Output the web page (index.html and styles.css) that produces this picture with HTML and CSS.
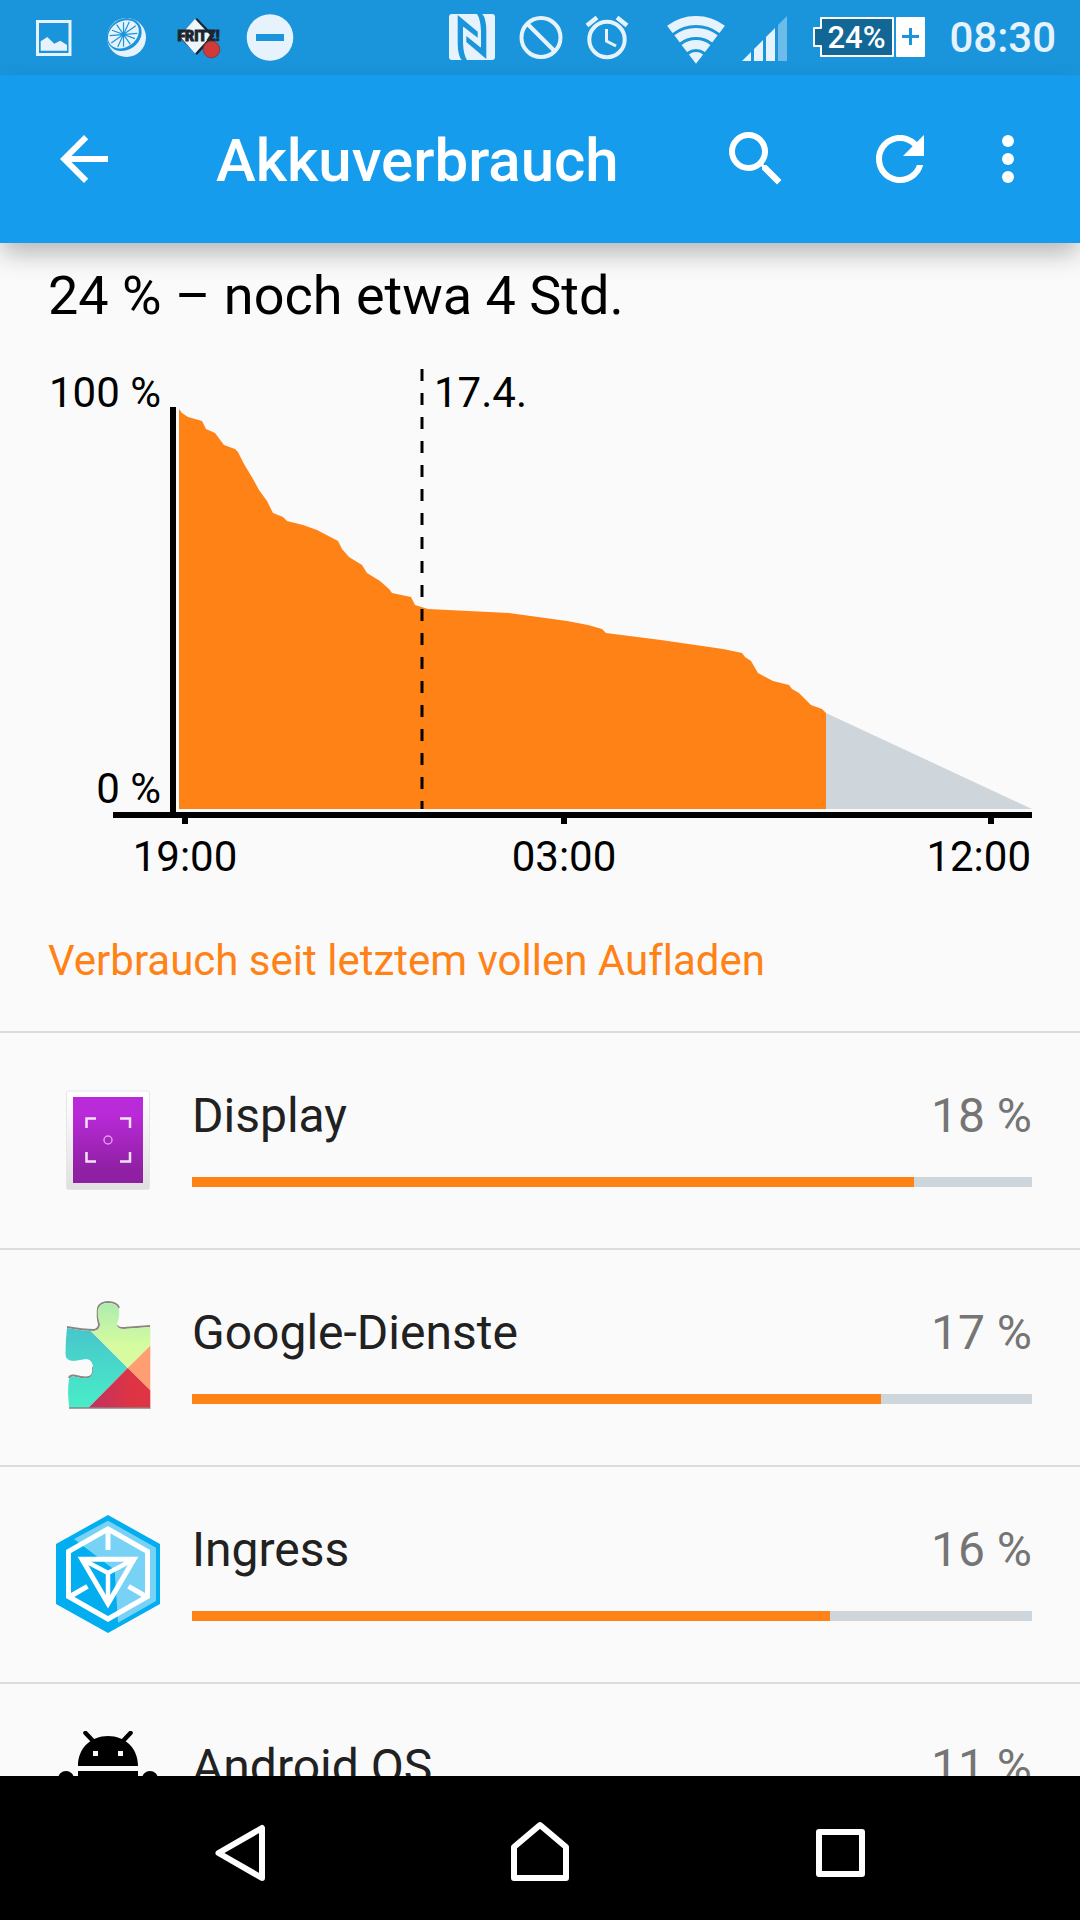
FILE: index.html
```html
<!DOCTYPE html>
<html lang="de">
<head>
<meta charset="utf-8">
<meta name="viewport" content="width=device-width, initial-scale=1">
<title>Akkuverbrauch</title>
<link rel="stylesheet" href="styles.css">
</head>
<body>
<div class="app">
  <div class="status-bar">
    <svg class="slot" viewBox="18 0 72 75" aria-hidden="true">
      <path d="M37.5 21.5h32.5v33h-32.5z" fill="none" stroke="#e6f3fc" stroke-width="3"/>
      <path d="M40.7 41.3 47.3 37 54.3 43.7 60.3 40.7 67 45v5.7H40.7z" fill="#e6f3fc"/>
    </svg>
    <svg class="slot" viewBox="90 0 72 75" aria-hidden="true">
      <circle cx="126.5" cy="37.5" r="19.5" fill="#e6f3fc"/>
      <g transform="rotate(-35 124.5 35)">
        <ellipse cx="124.5" cy="34.5" rx="18.3" ry="15.5" fill="#1a95dc"/>
        <ellipse cx="124" cy="33.8" rx="16.6" ry="12.8" fill="#e6f3fc"/>
        <g stroke="#1a95dc" stroke-width="1.2">
          <path d="M109 34h30M124 22v24M112 27l24 14M112 41l24-14M117 24l14 20M117 44l14-20"/>
        </g>
      </g>
    </svg>
    <svg class="slot" viewBox="162 0 72 75" role="img" aria-label="FRITZ!">
      <path d="M197 18 214.5 36 197 55 178 36z" fill="#1b2730"/>
      <path d="M195 19 211 36 195 53.5 179.5 36z" fill="#eef5fb"/>
      <text class="fritz" x="198.5" y="41" text-anchor="middle">FRITZ!</text>
      <circle cx="211.5" cy="49.5" r="8.3" fill="#d03b3a" stroke="#8b3540"/>
    </svg>
    <svg class="slot" viewBox="234 0 72 75" aria-hidden="true">
      <circle cx="270" cy="37.5" r="23.3" fill="#e6f3fc"/>
      <path d="M256 34h28v7h-28z" fill="#1a95dc"/>
    </svg>
    <span class="spacer"></span>
    <svg class="slot" viewBox="436 0 72 75" aria-hidden="true">
      <rect x="449" y="14" width="46" height="46" rx="3" fill="#e6f3fc"/>
      <path d="M457.7 15 477.7 31.7V37.7L463.7 27H463V43Q463.5 55 467 60H461.7Q458 56 457.7 44z" fill="#1a95dc"/>
      <path d="M486.3 59 466.3 42V36L480.3 47.3H481V31Q480.5 19 477 14H482.3Q486 18 486.3 30z" fill="#1a95dc"/>
    </svg>
    <svg class="slot-small" viewBox="508 0 66 75" fill="none" stroke="#e6f3fc" stroke-width="4" aria-hidden="true">
      <circle cx="541" cy="37.5" r="19.5"/>
      <path d="M527 23.5 555 51.5"/>
    </svg>
    <svg class="slot-small" viewBox="574 0 66 75" fill="none" stroke="#e6f3fc" stroke-width="4" aria-hidden="true">
      <circle cx="607" cy="39.5" r="17.7"/>
      <path d="M587 25.5 597 17.5M627 25.5 617 17.5" stroke-width="4.5"/>
      <path d="M606.5 29V41L616 46" stroke-width="3"/>
    </svg>
    <svg class="slot wifi" viewBox="660 0 72 75" fill="none" stroke="#e6f3fc" stroke-width="9" aria-hidden="true">
      <path d="M669.8 29.4A43.2 43.2 0 0 1 722.2 29.4"/>
      <path d="M677.1 38.9A31.2 31.2 0 0 1 714.9 38.9"/>
      <path d="M684.3 48.5A19.2 19.2 0 0 1 707.7 48.5"/>
      <path d="M696 63.7 688.9 54.4A11.7 11.7 0 0 1 703.1 54.4z" fill="#e6f3fc" stroke="none"/>
    </svg>
    <svg class="slot-small" viewBox="732 0 66 75" fill="#e6f3fc" aria-hidden="true">
      <path d="M742 61l9-9v9zM754 61V49l9-9v21zM766 61V37l9-9v33z"/>
      <path d="M778 61V25l9-9v45z" fill="#6cbbe9"/>
    </svg>
    <svg class="battery" viewBox="798 0 134 75" role="img" aria-label="Akku 24%">
      <path d="M821 18H893V56H821V46H814V28H821z" fill="#126797" stroke="#fff" stroke-width="2" stroke-linejoin="round"/>
      <rect x="896" y="17" width="29" height="40" rx="1" fill="#fff"/>
      <path d="M902 36.5h17M910.5 28v17" stroke="#1a95dc" stroke-width="3"/>
      <text class="battery-text" x="856.5" y="48" text-anchor="middle">24%</text>
    </svg>
    <time class="clock">08:30</time>
  </div>

  <header class="app-bar">
    <button class="bar-button back" type="button" aria-label="Zurück">
      <svg class="bar-icon" viewBox="0 0 24 24"><path d="M20 11H7.83l5.59-5.59L12 4l-8 8 8 8 1.41-1.41L7.83 13H20v-2z"/></svg>
    </button>
    <h1 class="title">Akkuverbrauch</h1>
    <button class="bar-button" type="button" aria-label="Suchen">
      <svg class="bar-icon" viewBox="0 0 24 24"><path d="M15.5 14h-.79l-.28-.27A6.471 6.471 0 0 0 16 9.5 6.5 6.5 0 1 0 9.5 16c1.61 0 3.09-.59 4.23-1.57l.27.28v.79l5 4.99L20.49 19l-4.99-5zm-6 0C7.01 14 5 11.99 5 9.5S7.01 5 9.5 5 14 7.01 14 9.5 11.99 14 9.5 14z"/></svg>
    </button>
    <button class="bar-button" type="button" aria-label="Aktualisieren">
      <svg class="bar-icon" viewBox="0 0 24 24"><path d="M17.65 6.35C16.2 4.9 14.21 4 12 4c-4.42 0-7.99 3.58-7.99 8s3.57 8 7.99 8c3.73 0 6.84-2.55 7.73-6h-2.08c-.82 2.33-3.04 4-5.65 4-3.31 0-6-2.69-6-6s2.69-6 6-6c1.66 0 3.14.69 4.22 1.78L13 11h7V4l-2.35 2.35z"/></svg>
    </button>
    <button class="bar-button more" type="button" aria-label="Weitere Optionen">
      <svg class="bar-icon" viewBox="0 0 24 24"><circle cx="12" cy="6" r="2"/><circle cx="12" cy="12" r="2"/><circle cx="12" cy="18" r="2"/></svg>
    </button>
  </header>

  <main class="content">
    <section class="summary">
      <h2 class="estimate">24 % – noch etwa 4 Std.</h2>
      <svg class="chart" viewBox="48 356 984 529" role="img" aria-label="Akkuverlauf">
        <path fill="#cfd6db" d="M826 713 1032 809H826z"/>
        <path fill="#ff8216" d="M179 409 182 413 188 417 202 421 206 429 215 433 224 445 235 449 238 452 244 464 253 479 259 490 267 501 273 513 283 517 287 521 303 525 317 530 338 541 342 549 349 557 362 565 367 573 380 581 389 589 392 593 411 597 415 605 428 609 509 613 567 621 588 625 602 629 606 633 661 640 723 649 742 653 745 657 751 661 758 673 773 681 789 685 792 689 799 693 807 701 811 705 822 709 826 713V809H179z"/>
        <path d="M422 369V809" stroke="#000" stroke-width="3" stroke-dasharray="12 12"/>
        <path d="M170 407h6v405h856v6H994v6h-6v-6H567v6h-6v-6H188v6h-6v-6H113v-6h57z"/>
        <g class="chart-label">
          <text x="161" y="407" text-anchor="end">100 %</text>
          <text x="161" y="803" text-anchor="end">0 %</text>
          <text x="434" y="407">17.4.</text>
          <text x="185" y="871" text-anchor="middle">19:00</text>
          <text x="564" y="871" text-anchor="middle">03:00</text>
          <text x="1031" y="871" text-anchor="end">12:00</text>
        </g>
      </svg>
      <p class="caption">Verbrauch seit letztem vollen Aufladen</p>
    </section>

    <ul class="usage">
      <li class="row">
        <svg class="row-icon" viewBox="0 0 120 120" aria-hidden="true">
          <defs>
            <linearGradient id="frame" x2="0" y2="1"><stop stop-color="#fff"/><stop offset="1" stop-color="#e0e0e0"/></linearGradient>
            <linearGradient id="screen" x2="0" y2="1"><stop offset=".2" stop-color="#b92ad8"/><stop offset=".85" stop-color="#8f20a3"/></linearGradient>
          </defs>
          <rect x="18.5" y="11" width="83" height="98.5" rx="2" fill="url(#frame)" stroke="#e6e6e6"/>
          <path d="M25 17h70v86H25z" fill="url(#screen)"/>
          <path d="M38.5 48V38.5H48M72 38.5H82V48M82 72V81.5H72M48 81.5H38.5V72" fill="none" stroke="#f5e3f8" stroke-width="2.5"/>
          <circle cx="60" cy="60" r="4" fill="none" stroke="#dc9be8" stroke-width="1.5"/>
        </svg>
        <div class="row-body">
          <div class="row-head"><label for="use-display">Display</label><span class="percent">18 %</span></div>
          <progress class="meter" id="use-display" max="100" value="86"></progress>
        </div>
      </li>
      <li class="row">
        <svg class="row-icon" viewBox="0 0 120 120" aria-hidden="true">
          <defs>
            <clipPath id="piece"><path d="M19 31Q35 34 46 34Q53 33 52 27Q49 20 50 12Q52 6 60 6Q69 6 71 12Q72 20 69 27Q69 32 76 32L102.3 30V110.5H21.3Q19 95 21 82Q22 79 26 79.5Q40 83 43 79Q45 76 45 72Q45 62 38 62L26 64Q17 64 17.5 56Q17.5 43 19 31z"/></clipPath>
            <linearGradient id="teal" x2="0" y2="1"><stop offset=".2" stop-color="#48c1cc"/><stop offset="1" stop-color="#48edc8"/></linearGradient>
            <linearGradient id="lime" x2="0" y2="1"><stop stop-color="#a9e9b1"/><stop offset=".7" stop-color="#d6fc9f"/></linearGradient>
            <linearGradient id="red"><stop stop-color="#bd3262"/><stop offset=".7" stop-color="#df3444"/></linearGradient>
          </defs>
          <path d="M19 30Q35 33 46 33Q51 32 51 27Q49 20 50 11Q52 5 60 5Q69 5 71 11M69 28Q69 31 76 31L102 29M21 81Q22 78 26 78.5Q40 82 43 79Q46 76 45 70" fill="none" stroke="#8f8580" stroke-width="2"/>
          <g clip-path="url(#piece)">
            <path d="M10 0H42.7V34L79.7 71 40.3 111H10z" fill="url(#teal)"/>
            <path d="M42.7 34V0H103V48L79.7 71z" fill="url(#lime)"/>
            <path d="M103 48V94L79.7 71z" fill="#ff9e73"/>
            <path d="M79.7 71 103 94V111H40.3z" fill="url(#red)"/>
          </g>
          <path d="M21 111H102.5" stroke="#5c4048" stroke-width="1"/>
        </svg>
        <div class="row-body">
          <div class="row-head"><label for="use-google">Google-Dienste</label><span class="percent">17 %</span></div>
          <progress class="meter" id="use-google" max="100" value="82"></progress>
        </div>
      </li>
      <li class="row">
        <svg class="row-icon" viewBox="0 0 120 120" aria-hidden="true">
          <path d="M60 1 112 30V90L60 119 8 90V30z" fill="#02aef0"/>
          <path d="M26 25 60 6.7 108 33.7V87L70 108.7 66.7 56z" fill="#77d2f6"/>
          <g fill="none" stroke="#fff" stroke-width="5">
            <path d="M60 15 99.5 37.5V82.5L60 105 20.5 82.5V37.5z"/>
            <path d="M60 14V36M22 82.5 39.5 72.3M98 82.5 80.5 72.3"/>
            <path d="M34 45.2H86L60 89.5z"/>
            <path d="M34 45.2 60 59 86 45.2M60 59V88" stroke-width="4.5"/>
          </g>
        </svg>
        <div class="row-body">
          <div class="row-head"><label for="use-ingress">Ingress</label><span class="percent">16 %</span></div>
          <progress class="meter" id="use-ingress" max="100" value="76"></progress>
        </div>
      </li>
      <li class="row">
        <svg class="row-icon" viewBox="0 0 120 120" aria-hidden="true">
          <path d="M30 35C30 17 43 5 60 5S90 17 90 35zM30 40H90V88Q90 94 84 94H36Q30 94 30 88z"/>
          <path d="M37.5 2 46 11M82.5 2 74 11" stroke="#000" stroke-width="4.5" stroke-linecap="round"/>
          <path d="M45 20h5v5h-5zM70 20h5v5h-5z" fill="#fafafa"/>
          <path d="M18 48V74M102 48V74M47 92V110M73 92V110" stroke="#000" stroke-width="16" stroke-linecap="round"/>
        </svg>
        <div class="row-body">
          <div class="row-head"><label for="use-android">Android OS</label><span class="percent">11 %</span></div>
          <progress class="meter" id="use-android" max="100" value="53"></progress>
        </div>
      </li>
    </ul>
  </main>

  <nav class="nav-bar">
    <button class="nav-button" type="button" aria-label="Zurück">
      <svg class="nav-icon" viewBox="204 1812 72 72"><path d="M262 1828V1878L218.5 1853z"/></svg>
    </button>
    <button class="nav-button" type="button" aria-label="Startbildschirm">
      <svg class="nav-icon" viewBox="504 1812 72 72"><path d="M514 1878V1847L540 1825 566 1847V1878z"/></svg>
    </button>
    <button class="nav-button" type="button" aria-label="Letzte Apps">
      <svg class="nav-icon" viewBox="804 1812 72 72"><path d="M819 1832H862V1874H819z"/></svg>
    </button>
  </nav>
</div>
</body>
</html>
```
FILE: styles.css
```css
* {
  box-sizing: border-box;
}

body {
  margin: 0;
  background: #fafafa;
  color: #000;
  font-family: Roboto, "Liberation Sans", sans-serif;
  font-variant-ligatures: none;
}

button {
  border: 0;
  padding: 0;
  background: none;
}

.app {
  display: flex;
  flex-direction: column;
  height: 100vh;
}

/* System status bar */
.status-bar {
  display: flex;
  flex: none;
  align-items: center;
  padding: 0 24px 0 18px;
  background: #1a95dc;
}

.status-bar svg {
  flex: none;
  height: 75px;
}

.slot {
  width: 72px;
}

.slot-small {
  width: 66px;
}

.wifi {
  margin-left: 20px;
}

.battery {
  width: 134px;
}

.spacer {
  flex: 1;
}

.fritz {
  font-size: 14px;
  font-weight: 900;
  fill: #1b2730;
  stroke: #1b2730;
  stroke-width: 1px;
}

.battery-text {
  font-size: 31px;
  font-weight: 500;
  fill: #fff;
}

.clock {
  width: 124px;
  color: #e6f3fc;
  font-size: 42px;
  font-weight: 500;
  line-height: 74px;
  text-align: right;
}

/* App bar */
.app-bar {
  position: relative;
  z-index: 1;
  display: flex;
  flex: none;
  height: 168px;
  background: #159cec;
  box-shadow: 0 12px 24px -2px rgba(0, 0, 0, 0.28);
}

.bar-button {
  display: flex;
  align-items: center;
  justify-content: center;
  width: 144px;
}

.back {
  width: 168px;
}

.more {
  width: 108px;
  padding-right: 36px;
}

.bar-icon {
  width: 72px;
  height: 72px;
  fill: #fff;
}

.title {
  flex: 1;
  margin: 0;
  padding: 2px 0 0 48px;
  color: #fff;
  font-size: 60px;
  font-weight: 500;
  line-height: 168px;
}

/* Scrolling content */
.content {
  flex: 1;
  min-height: 0;
  overflow-y: auto;
  scrollbar-width: none;
}

.summary {
  padding: 17px 48px 42px;
}

.estimate {
  margin: 0 0 24px;
  font-size: 54px;
  font-weight: 400;
  line-height: 72px;
}

.chart {
  display: block;
  width: 100%;
}

.chart-label {
  font-size: 42px;
}

.caption {
  margin: 48px 0 0;
  color: #ff8216;
  font-size: 42px;
  line-height: 56px;
}

.usage {
  margin: 0;
  padding: 0;
  list-style: none;
}

.row {
  display: flex;
  gap: 24px;
  padding: 47px 48px 48px;
  border-top: 2px solid #dcdcdc;
}

.row-icon {
  flex: none;
  width: 120px;
  height: 120px;
}

.row-body {
  flex: 1;
}

.row-head {
  display: flex;
  justify-content: space-between;
  color: #212121;
  font-size: 48px;
  line-height: 72px;
}

.percent {
  color: #757575;
}

.meter {
  display: block;
  width: 100%;
  height: 10px;
  margin-top: 25px;
  border: 0;
  background: #cfd6db;
  appearance: none;
}

.meter::-webkit-progress-bar {
  background: #cfd6db;
}

.meter::-webkit-progress-value {
  background: #ff8216;
}

.meter::-moz-progress-bar {
  background: #ff8216;
}

/* System navigation */
.nav-bar {
  display: grid;
  flex: none;
  grid-template-columns: repeat(3, 1fr);
  height: 144px;
  padding: 0 90px;
  background: #000;
}

.nav-button {
  display: flex;
  align-items: center;
  justify-content: center;
}

.nav-icon {
  width: 72px;
  height: 72px;
  fill: none;
  stroke: #fff;
  stroke-width: 6px;
  stroke-linejoin: round;
}
```
